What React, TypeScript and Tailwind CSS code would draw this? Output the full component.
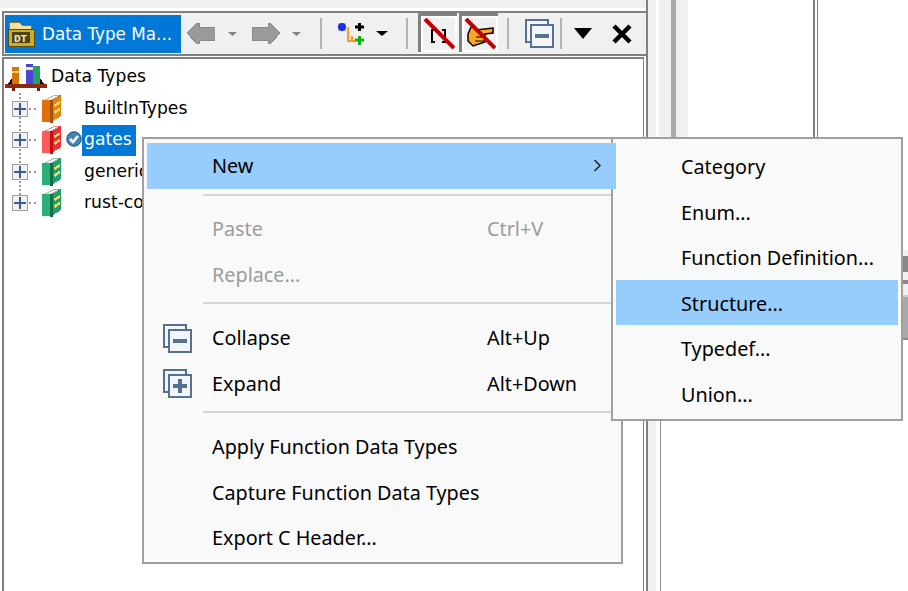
import React from 'react';

const uiFont = "font-['Noto_Sans','Open_Sans',sans-serif]";
const treeFont = "font-['DejaVu_Sans','Liberation_Sans',sans-serif]";

// pixel-ish book used by the tree rows
function Book({ face, dark, side }: { face: string; dark: string; side: string }) {
  return (
    <svg width="20" height="28" viewBox="0 0 20 29" shapeRendering="crispEdges">
      <polygon points="9,6 19,0 19,22 9,28" fill={side} />
      <polygon points="1,6 13,0 19,0 7,6" fill="#ffffff" stroke={dark} strokeWidth="0.5" />
      <rect x="0" y="5" width="8" height="23" fill={face} />
      <rect x="8" y="5" width="3" height="24" fill={dark} />
      <path d="M12 10 L18 6 L18 9 L13 13 Z M12 17 L18 13 L18 16 L13 20 Z" fill="#f6d36a" />
    </svg>
  );
}

function PlusBox() {
  return (
    <svg width="16" height="16" viewBox="0 0 16 16" shapeRendering="crispEdges">
      <rect x="0.5" y="0.5" width="15" height="15" fill="#f2f2f2" stroke="#a0a0a0" />
      <rect x="2" y="7" width="12" height="2" fill="#3d5a94" />
      <rect x="7" y="2" width="2" height="12" fill="#3d5a94" />
    </svg>
  );
}

function TreeRow({ label, children, selected, badge }: { label: string; children: React.ReactNode; selected?: boolean; badge?: boolean }) {
  return (
    <div className="flex h-[31.5px] items-center pl-[8px]">
      <PlusBox />
      <div className="ml-[1px] w-[7px] border-t-2 border-dotted border-[#999]" />
      <div className="ml-[6px] flex w-[20px] justify-center">{children}</div>
      <div className="flex w-[20px] justify-center pl-[4px]">
        {badge && (
          <svg width="16" height="16" viewBox="0 0 16 16" className="-mt-[3px] shrink-0">
            <circle cx="8" cy="8" r="7.25" fill="#3e85b8" stroke="#2f4f7a" strokeWidth="1" />
            <path d="M4 8 L7 11 L12 5" fill="none" stroke="#fff" strokeWidth="2.6" />
          </svg>
        )}
      </div>
      <span className={`flex h-[31px] items-center pl-[2px] ${selected ? 'bg-[#0078d7] pr-[4px] text-white' : 'pr-[2px] text-black'}`}>{label}</span>
    </div>
  );
}

function Sep() {
  return <div className="h-[31px] w-[2px] bg-[#b4b4b4]" />;
}

function Caret({ w = 9, h = 4, color = '#808080' }: { w?: number; h?: number; color?: string }) {
  return (
    <svg width={w} height={h} viewBox="0 0 10 5" preserveAspectRatio="none">
      <polygon points="0,0 10,0 5,5" fill={color} />
    </svg>
  );
}

function GrayArrow({ flip }: { flip?: boolean }) {
  return (
    <svg width="28" height="21" viewBox="0 0 28 21" shapeRendering="crispEdges" className={flip ? '-scale-x-100' : ''}>
      <polygon points="0,10 10,0 12,0 12,4 28,4 28,17 12,17 12,21 10,21" fill="#9a9a9a" stroke="#888" />
    </svg>
  );
}

function StackIcon({ plus, size = 29 }: { plus?: boolean; size?: number }) {
  return (
    <svg width={size} height={size} viewBox="0 0 29 29" shapeRendering="crispEdges">
      <rect x="1" y="1" width="22" height="22" fill="#f3f5fd" stroke="#567092" strokeWidth="2" />
      <rect x="6" y="6" width="22" height="22" fill="#f3f5fd" stroke="#567092" strokeWidth="2" />
      <rect x="10" y="15" width="14" height="4" fill="#567092" />
      {plus && <rect x="15" y="10" width="4" height="14" fill="#567092" />}
    </svg>
  );
}

function ToggleButton({ children }: { children: React.ReactNode }) {
  return (
    <div className="-mt-[2px] flex h-[39px] w-[39px] items-center justify-center border-t-[3px] border-l-[3px] border-[#808080] bg-white">
      <div className="flex h-[32px] w-[32px] items-center justify-center bg-[#f0f0f0]">{children}</div>
    </div>
  );
}

function Toolbar() {
  return (
    <div className="flex h-[45px] items-center border-y-2 border-l-2 border-[#808080] bg-[#f0f0f0] pl-[1px]">
      <div className={`flex h-[38px] w-[176px] items-center gap-[7px] bg-[#0078d7] pl-[2px] text-[16.8px] text-white ${treeFont}`}>
        <svg className="shrink-0" width="28" height="26" viewBox="0 0 28 26" shapeRendering="crispEdges">
          <path d="M2 1 H12 L15 4 H24 V10 H2 Z" fill="#f4e29c" stroke="#8a7a20" />
          <rect x="1" y="8" width="26" height="17" fill="#c9ad2d" stroke="#5b4d10" />
          <rect x="5" y="11" width="18" height="11" fill="#4d4518" />
          <text x="7" y="21" fontSize="11" fontWeight="700" fill="#efe7b0" fontFamily="Liberation Mono">DT</text>
        </svg>
        <span className="pt-[2px] whitespace-nowrap">Data Type Ma...</span>
      </div>
      <div className="ml-[6px]"><GrayArrow /></div>
      <div className="ml-[13px]"><Caret /></div>
      <div className="ml-[15px]"><GrayArrow flip /></div>
      <div className="ml-[12px]"><Caret /></div>
      <div className="ml-[19px]"><Sep /></div>
      <svg className="ml-[16px]" width="27" height="22" viewBox="0 0 27 22">
        <path d="M10 4 V18 H17 M14 13 V18" fill="none" stroke="#ff9a1e" strokeWidth="2" />
        <path d="M0 4 H8 M4 0 V8 M2 2 H6 V6 H2 Z" stroke="#1f2fe0" strokeWidth="3" />
        <path d="M17 4 H26 M21.500 0 V8" stroke="#000" strokeWidth="3" />
        <path d="M17 17 H26 M21.500 13 V22" stroke="#10b010" strokeWidth="3" />
      </svg>
      <div className="ml-[11px]"><Caret w={12} h={5} color="#000" /></div>
      <div className="ml-[18px]"><Sep /></div>
      <div className="ml-[10px]">
        <ToggleButton>
          <svg width="32" height="32" viewBox="0 0 32 32">
            <path d="M12 12 H9 V24 H12 M19 12 H22 V24 H19" fill="none" stroke="#000" strokeWidth="1.500" shapeRendering="crispEdges" />
            <path d="M2 1 L31 30" stroke="#c00000" strokeWidth="4" />
          </svg>
        </ToggleButton>
      </div>
      <div className="ml-[2px]">
        <ToggleButton>
          <svg width="32" height="32" viewBox="0 0 32 32">
            <path d="M4 16 L8 7 L12 12 L29 10 V15 L21 16 V24 L9 28 L4 23 Z" fill="#ffa51e" stroke="#000" strokeWidth="1.500" />
            <path d="M12 19 H21 M11 23 H20" fill="none" stroke="#000" strokeWidth="1" />
            <path d="M2 1 L31 30" stroke="#c00000" strokeWidth="4" />
          </svg>
        </ToggleButton>
      </div>
      <div className="ml-[9px]"><Sep /></div>
      <div className="ml-[16px]"><StackIcon /></div>
      <div className="ml-[6px]"><Sep /></div>
      <div className="ml-[12px]"><Caret w={18} h={11} color="#000" /></div>
      <svg className="ml-[20px]" width="20" height="20" viewBox="0 0 20 20">
        <path d="M2 2 L18 18 M18 2 L2 18" stroke="#000" strokeWidth="4.500" />
      </svg>
    </div>
  );
}

function DataTypesPanel() {
  return (
    <div className="flex h-full w-[646px] shrink-0 flex-col">
      <div className="h-[8px] shrink-0 bg-[#f0f0f0]" />
      <div className="h-[3px] shrink-0" />
      <div className="pl-[2px]">
        <Toolbar />
      </div>
      <div className={`mt-[1px] mr-[2px] ml-[2px] min-h-0 flex-1 border-t-2 border-r border-l-2 border-[#808080] bg-white pt-[1px] text-[17.2px] ${treeFont}`}>
        <div className="flex h-[33px] items-center pl-[1px]">
          <svg width="42" height="30" viewBox="0 0 42 30" shapeRendering="crispEdges">
            <rect x="7" y="5" width="7" height="17" fill="#d9730a" />
            <rect x="7" y="9" width="7" height="2" fill="#f6d36a" />
            <rect x="21" y="2" width="7" height="20" fill="#4a45d8" />
            <rect x="21" y="5" width="7" height="3" fill="#f6e98c" />
            <rect x="28" y="4" width="7" height="18" fill="#24a06a" />
            <path d="M3 22 L7 16 V22 M35 16 L39 22 H35" fill="#000" />
            <rect x="0" y="22" width="42" height="4" fill="#8b2a10" />
            <rect x="7" y="26" width="3" height="3" fill="#6e1f0a" />
            <rect x="32" y="26" width="3" height="3" fill="#6e1f0a" />
          </svg>
          <span className="ml-[4px] text-black">Data Types</span>
        </div>
        <div className="relative">
          <div className="absolute top-0 bottom-[16px] left-[15px] border-l-2 border-dotted border-[#999]" />
          <div className="relative">
            <TreeRow label="BuiltInTypes"><Book face="#e0700a" dark="#a85000" side="#e0850f" /></TreeRow>
            <TreeRow label="gates" selected badge><Book face="#ff5a5a" dark="#c01010" side="#e83030" /></TreeRow>
            <TreeRow label="generic"><Book face="#2bb078" dark="#107048" side="#20a068" /></TreeRow>
            <TreeRow label="rust-core"><Book face="#2bb078" dark="#107048" side="#20a068" /></TreeRow>
          </div>
        </div>
      </div>
    </div>
  );
}

function MenuItem({ label, shortcut, icon, active, disabled, arrow, low }: { label: string; shortcut?: string; icon?: React.ReactNode; active?: boolean; disabled?: boolean; arrow?: boolean; low?: boolean }) {
  return (
    <div className={`relative flex h-[45.5px] items-center ${active ? 'bg-[#96cdfc]' : ''} ${disabled ? 'text-[#9c9c9c]' : 'text-black'}`}>
      <div className="flex w-[65px] shrink-0 pl-[16px]">{icon}</div>
      <span className={`whitespace-nowrap ${low ? 'pt-[3px]' : ''}`}>{label}</span>
      {shortcut && <span className="absolute left-[340px]">{shortcut}</span>}
      {arrow && (
        <svg className="absolute right-[16px]" width="9" height="13" viewBox="0 0 9 13">
          <path d="M1.500 1 L7 6.500 L1.500 12" fill="none" stroke="#222" strokeWidth="1.500" />
        </svg>
      )}
    </div>
  );
}

function MenuLine({ high }: { high?: boolean }) {
  return <div className={`ml-[56px] h-[2px] bg-[#d6d6d6] ${high ? 'mt-[4px] mb-[12px]' : 'mt-[5px] mb-[11px]'}`} />;
}

export default function App() {
  return (
    <div className="relative flex h-[591px] w-[908px] overflow-hidden bg-white">
      <DataTypesPanel />
      <div className="w-[2px] shrink-0 bg-[#808080]" />
      <div className="w-[8px] shrink-0 bg-[#f0f0f0]" />
      <div className="w-[3px] shrink-0" />

      {/* neighbouring panels, only their edges show round the menu */}
      <div className="flex min-w-0 flex-1 flex-col">
        <div className="flex h-[200px] shrink-0">
          <div className="flex w-[29px] shrink-0 justify-center bg-[#f0f0f0]">
            <div className="w-[5px] bg-[#a9a9a9]" />
          </div>
          <div className="w-[125px] shrink-0" />
          <div className="w-[5px] shrink-0 border-r border-l-2 border-[#808080]" />
        </div>
        <div className="ml-[1px] flex flex-1 flex-col items-end border-l border-[#909090] pt-[50px]">
          <div className="h-[6px] w-[5px] bg-[#f0f0f0]" />
          <div className="h-[16px] w-[5px] bg-[#888]" />
          <div className="h-[8px] w-[5px] bg-[#f0f0f0]" />
          <div className="h-[4px] w-[5px] bg-[#888]" />
          <div className="h-[11px] w-[5px] bg-[#f0f0f0]" />
          <div className="h-[2px] w-[5px] bg-[#ccc]" />
          <div className="h-[41px] w-[5px] bg-[#a9a9a9]" />
          <div className="h-[2px] w-[5px] bg-[#888]" />
        </div>
      </div>

      {/* context menu */}
      <div className={`absolute top-[137px] left-[142px] h-[427px] w-[481px] border-2 border-[#a0a0a0] bg-[#f9f9f9] px-[3px] pt-[4px] text-[19.8px] ${uiFont}`}>
        <MenuItem label="New" active arrow />
        <MenuLine />
        <MenuItem label="Paste" shortcut="Ctrl+V" disabled />
        <MenuItem label="Replace..." disabled />
        <MenuLine high />
        <MenuItem label="Collapse" shortcut="Alt+Up" icon={<StackIcon />} />
        <MenuItem label="Expand" shortcut="Alt+Down" icon={<StackIcon plus />} />
        <MenuLine high />
        <MenuItem label="Apply Function Data Types" />
        <MenuItem label="Capture Function Data Types" />
        <MenuItem label="Export C Header..." />
      </div>

      {/* submenu */}
      <div className={`absolute top-[137px] left-[611px] h-[284px] w-[292px] border-2 border-[#a0a0a0] bg-[#f9f9f9] px-[3px] pt-[4px] text-[19.8px] ${uiFont}`}>
        <div className="absolute top-[4px] -left-[2px] h-[45.5px] w-[5px] bg-[#96cdfc]" />
        <MenuItem label="Category" low />
        <MenuItem label="Enum..." low />
        <MenuItem label="Function Definition..." low />
        <MenuItem label="Structure..." active low />
        <MenuItem label="Typedef..." low />
        <MenuItem label="Union..." low />
      </div>
    </div>
  );
}
